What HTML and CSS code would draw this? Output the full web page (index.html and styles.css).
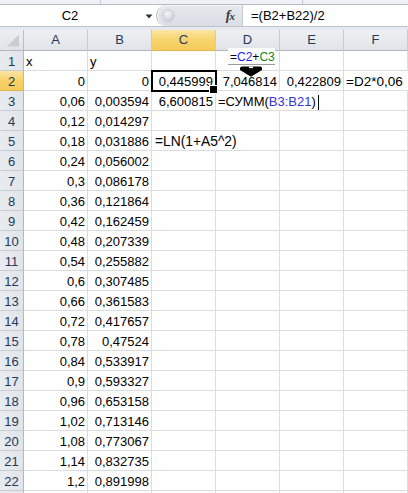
FILE: index.html
```html
<!DOCTYPE html>
<html>
<head>
<meta charset="utf-8">
<link rel="stylesheet" href="styles.css">
</head>
<body>
<div class="app">
  <div class="ribbon-edge"><span class="seg seg1"></span><span class="seg seg2"></span></div>
  <div class="formula-bar">
    <div class="name-box">
      <span class="name">C2</span>
      <svg class="dd" width="8" height="5" viewBox="0 0 8 5"><path d="M0.5 0.5 H7.5 L4 4.5 Z" fill="#333"/></svg>
    </div>
    <div class="fx-zone">
      <span class="knob"></span>
      <span class="fx"><i>f</i><i class="x">x</i></span>
    </div>
    <div class="formula">=(B2+B22)/2</div>
  </div>
  <div class="gap"></div>
  <div class="sheet">
    <div class="corner"><svg width="23" height="20" viewBox="0 0 23 20"><path d="M7 16.5 H19 V4.5 Z" fill="#c9cdd3"/></svg></div>
    <div class="hd">A</div><div class="hd">B</div><div class="hd on">C</div><div class="hd">D</div><div class="hd">E</div><div class="hd">F</div>

    <div class="rh">1</div><div class="c">x</div><div class="c">y</div><div class="c"></div>
    <div class="c tipcell">
      <div class="tip">
        <div class="tip-label">=<span class="blue">C2</span>+<span class="green">C3</span></div>
        <svg class="drag" width="24" height="11" viewBox="0 0 24 11"><path d="M1 2.2 Q1 0.5 3 0.5 H21 Q23 0.5 23 2.2 V4 L12 10.8 L1 4 Z" fill="#000"/><rect x="10" y="0.5" width="4" height="1.6" fill="#fff"/></svg>
      </div>
    </div>
    <div class="c"></div><div class="c"></div>

    <div class="rh on">2</div><div class="c r">0</div><div class="c r">0</div><div class="c r cur">0,445999</div><div class="c r">7,046814</div><div class="c r">0,422809</div><div class="c ov wide">=D2*0,06</div>

    <div class="rh">3</div><div class="c r">0,06</div><div class="c r">0,003594</div><div class="c r">6,600815</div><div class="c ov">=СУММ(<span class="ref">B3:B21</span>)<span class="caret"></span></div><div class="c"></div><div class="c"></div>

    <div class="rh">4</div><div class="c r">0,12</div><div class="c r">0,014297</div><div class="c"></div><div class="c"></div><div class="c"></div><div class="c"></div>

    <div class="rh">5</div><div class="c r">0,18</div><div class="c r">0,031886</div><div class="c ov wider">=LN(1+A5^2)</div><div class="c"></div><div class="c"></div><div class="c"></div>

    <div class="rh">6</div><div class="c r">0,24</div><div class="c r">0,056002</div><div class="c"></div><div class="c"></div><div class="c"></div><div class="c"></div>
    <div class="rh">7</div><div class="c r">0,3</div><div class="c r">0,086178</div><div class="c"></div><div class="c"></div><div class="c"></div><div class="c"></div>
    <div class="rh">8</div><div class="c r">0,36</div><div class="c r">0,121864</div><div class="c"></div><div class="c"></div><div class="c"></div><div class="c"></div>
    <div class="rh">9</div><div class="c r">0,42</div><div class="c r">0,162459</div><div class="c"></div><div class="c"></div><div class="c"></div><div class="c"></div>
    <div class="rh">10</div><div class="c r">0,48</div><div class="c r">0,207339</div><div class="c"></div><div class="c"></div><div class="c"></div><div class="c"></div>
    <div class="rh">11</div><div class="c r">0,54</div><div class="c r">0,255882</div><div class="c"></div><div class="c"></div><div class="c"></div><div class="c"></div>
    <div class="rh">12</div><div class="c r">0,6</div><div class="c r">0,307485</div><div class="c"></div><div class="c"></div><div class="c"></div><div class="c"></div>
    <div class="rh">13</div><div class="c r">0,66</div><div class="c r">0,361583</div><div class="c"></div><div class="c"></div><div class="c"></div><div class="c"></div>
    <div class="rh">14</div><div class="c r">0,72</div><div class="c r">0,417657</div><div class="c"></div><div class="c"></div><div class="c"></div><div class="c"></div>
    <div class="rh">15</div><div class="c r">0,78</div><div class="c r">0,47524</div><div class="c"></div><div class="c"></div><div class="c"></div><div class="c"></div>
    <div class="rh">16</div><div class="c r">0,84</div><div class="c r">0,533917</div><div class="c"></div><div class="c"></div><div class="c"></div><div class="c"></div>
    <div class="rh">17</div><div class="c r">0,9</div><div class="c r">0,593327</div><div class="c"></div><div class="c"></div><div class="c"></div><div class="c"></div>
    <div class="rh">18</div><div class="c r">0,96</div><div class="c r">0,653158</div><div class="c"></div><div class="c"></div><div class="c"></div><div class="c"></div>
    <div class="rh">19</div><div class="c r">1,02</div><div class="c r">0,713146</div><div class="c"></div><div class="c"></div><div class="c"></div><div class="c"></div>
    <div class="rh">20</div><div class="c r">1,08</div><div class="c r">0,773067</div><div class="c"></div><div class="c"></div><div class="c"></div><div class="c"></div>
    <div class="rh">21</div><div class="c r">1,14</div><div class="c r">0,832735</div><div class="c"></div><div class="c"></div><div class="c"></div><div class="c"></div>
    <div class="rh">22</div><div class="c r">1,2</div><div class="c r">0,891998</div><div class="c"></div><div class="c"></div><div class="c"></div><div class="c"></div>
    <div class="rh"></div><div class="c"></div><div class="c"></div><div class="c"></div><div class="c"></div><div class="c"></div><div class="c"></div>
  </div>
</div>
</body>
</html>
```

FILE: styles.css
```css
* { box-sizing: border-box; }

body {
  margin: 0;
  background: #fff;
  font-family: "Liberation Sans", Arial, sans-serif;
  color: #000;
}

.app {
  width: 408px;
  height: 493px;
  overflow: hidden;
  display: flex;
  flex-direction: column;
}

/* ribbon remnant at the top */
.ribbon-edge {
  height: 5px;
  flex: none;
  display: flex;
  background: #eef1f5;
  border-bottom: 1px solid #b6bcc5;
}
.seg { height: 100%; border-right: 1px solid #c3c8d0; }
.seg1 { width: 101px; }
.seg2 { width: 202px; }

/* formula bar */
.formula-bar {
  height: 22px;
  flex: none;
  display: flex;
  background: #fff;
  border-bottom: 1px solid #bcc2ca;
}
.name-box {
  width: 156px;
  display: flex;
  align-items: center;
}
.name {
  width: 140px;
  text-align: center;
  font-size: 13px;
  line-height: 21px;
}
.dd { margin-left: 5px; margin-top: 1px; }

.fx-zone {
  width: 86px;
  display: flex;
  align-items: center;
  background: linear-gradient(#e6e9ed, #dadee4);
  border-radius: 11px 0 0 11px;
  box-shadow: inset 1px 0 0 #fff, inset 0 1px 0 #f4f5f7;
  border-left: 1px solid #b4bac3;
  padding-left: 6px;
}
.knob {
  width: 11px;
  height: 11px;
  border-radius: 50%;
  background: radial-gradient(circle at 40% 35%, #f4f5f7 0%, #d5d9de 55%, #b9bec6 100%);
  box-shadow: 0 0 0 1px #c7ccd3;
}
.fx {
  margin-left: auto;
  margin-right: 7px;
  font-family: "Liberation Serif", "Times New Roman", serif;
  font-weight: bold;
  font-size: 14px;
  color: #3a3a3a;
  line-height: 21px;
}
.fx i { font-style: italic; }
.fx .x { font-size: 11px; margin-left: -1px; }

.formula {
  flex: 1;
  border-left: 1px solid #c6cbd2;
  padding-left: 8px;
  font-size: 13px;
  line-height: 21px;
  white-space: nowrap;
}

.gap {
  height: 3px;
  flex: none;
  background: #e6e9ed;
}

/* sheet grid */
.sheet {
  display: grid;
  grid-template-columns: 24px repeat(6, 64px);
  grid-template-rows: 21px;
  grid-auto-rows: 20px;
  font-size: 13px;
}

.corner {
  background: linear-gradient(#eceef1, #e0e3e8);
  border-right: 1px solid #b9bec6;
  border-bottom: 1px solid #b1b7c0;
}
.corner svg { display: block; }

.hd {
  background: linear-gradient(#eef0f3, #e0e3e8);
  border-right: 1px solid #c7ccd3;
  border-bottom: 1px solid #b1b7c0;
  text-align: center;
  color: #22395a;
  line-height: 20px;
}
.rh {
  background: linear-gradient(90deg, #e9ecef, #e1e4e9);
  border-right: 1px solid #b1b7c0;
  border-bottom: 1px solid #c7ccd3;
  text-align: center;
  color: #22395a;
  padding-top: 1px;
  line-height: 19px;
}
.hd.on {
  background: linear-gradient(#fbe5a5, #f8d570 45%, #f5cb5a);
  border-bottom-color: #e2b450;
}
.rh.on {
  background: linear-gradient(#fbe5a5, #f7d26a 50%, #f5cb5a);
  border-bottom-color: #e2b450;
}

.c {
  border-right: 1px solid #dadcdd;
  border-bottom: 1px solid #dadcdd;
  padding: 1px 2px 0;
  line-height: 19px;
  white-space: nowrap;
  overflow: visible;
}
.r { text-align: right; }
.ov { border-right-color: transparent; }
.wide { font-size: 13.5px; }
.wider { font-size: 13.8px; padding-left: 3px; }

/* selected cell C2 */
.cur {
  position: relative;
  z-index: 2;
  outline: 2px solid #000;
  outline-offset: -1px;
}
.cur::after {
  content: "";
  position: absolute;
  right: -3px;
  bottom: -4px;
  width: 7px;
  height: 7px;
  background: #000;
  border: 1px solid #fff;
}

/* in-cell editing in D3 */
.ref { color: #3434d8; }
.caret {
  display: inline-block;
  width: 1px;
  height: 15px;
  background: #000;
  margin-left: 2px;
  vertical-align: -4px;
}

/* formula tooltip with drag arrow above D2 */
.tipcell { position: relative; }
.tip {
  position: absolute;
  left: 12px;
  top: -3px;
  z-index: 3;
  width: 47px;
}
.tip-label {
  background: #fff;
  height: 17px;
  padding: 2px 0 0 2px;
  font-size: 12px;
  line-height: 14px;
  border-bottom: 1px solid #9c9c9c;
}
.blue { color: #1c1cf0; }
.green { color: #0c8a22; }
.drag {
  display: block;
  margin: 1px 0 0 11px;
}
```
